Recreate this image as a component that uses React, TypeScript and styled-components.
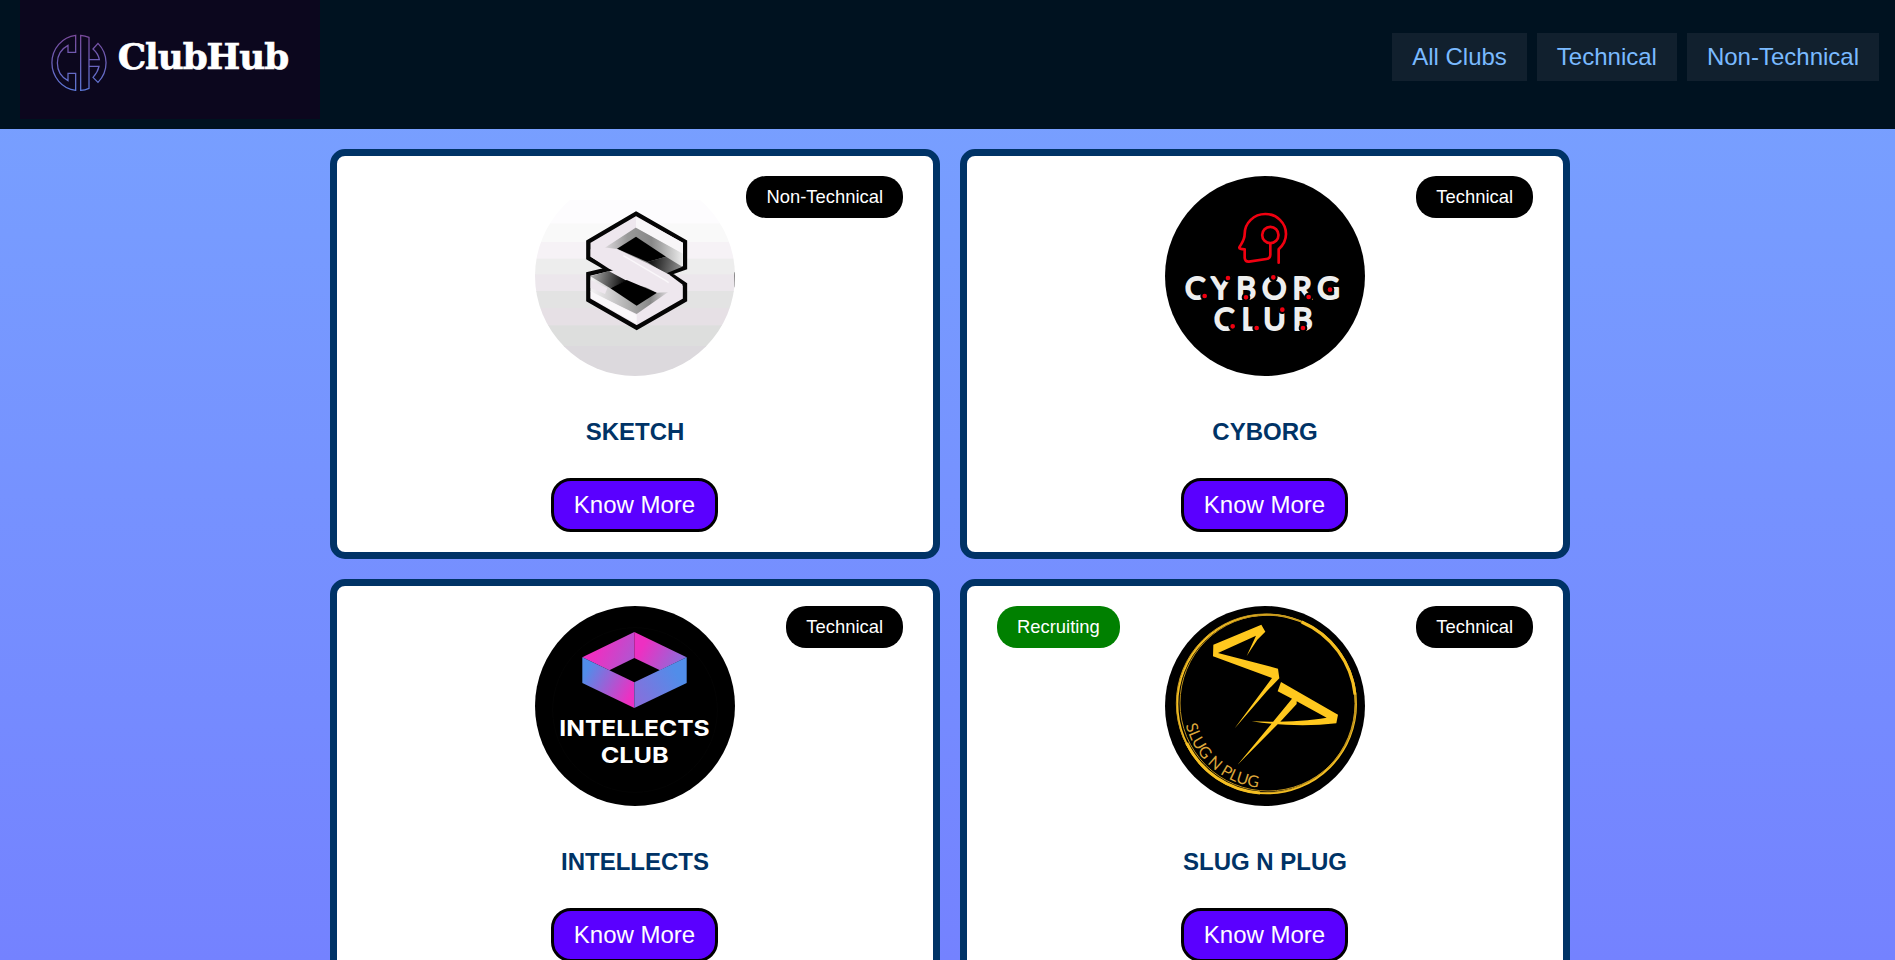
import React from 'react';
import styled, { createGlobalStyle } from 'styled-components';

const GlobalStyle = createGlobalStyle`
  * { box-sizing: border-box; }
  html, body { margin: 0; height: 100%; overflow: hidden; }
  body { font-family: "Liberation Sans", Arial, sans-serif; }
`;

const Page = styled.div`
  height: 960px;
  overflow: hidden;
  background: linear-gradient(180deg, #78a3ff 0%, #7482ff 100%);
`;

const Header = styled.header`
  display: flex;
  justify-content: space-between;
  align-items: flex-start;
  height: 129px;
  padding: 0 16px 0 20px;
  background: #001220;
`;

const Brand = styled.svg`
  display: block;
  width: 300px;
  height: 119px;
  background: #0c071e;
`;

const Nav = styled.nav`
  display: flex;
  gap: 10px;
  padding-top: 33px;
`;

const NavLink = styled.a`
  height: 48px;
  padding: 0 20px;
  font-size: 24px;
  line-height: 48px;
  white-space: nowrap;
  color: #7abaff;
  background: #11202e;
`;

const Grid = styled.main`
  display: grid;
  grid-template-columns: 610px 610px;
  gap: 20px;
  padding: 20px 0 0 330px;
`;

const Card = styled.article`
  position: relative;
  display: flex;
  flex-direction: column;
  align-items: center;
  height: 410px;
  padding-top: 20px;
  border: 7px solid #003366;
  border-radius: 15px;
  background: #fff;
`;

const Badge = styled.span<{ $side: 'left' | 'right' }>`
  position: absolute;
  top: 20px;
  ${(p) => p.$side}: 30px;
  height: 42px;
  padding: 0 20px;
  border-radius: 20px;
  font-size: 18.4px;
  line-height: 41px;
  color: #fff;
  background: ${(p) => (p.$side === 'left' ? '#008000' : '#000')};
`;

const Emblem = styled.svg`
  display: block;
  width: 200px;
  height: 200px;
  border-radius: 50%;
`;

const Title = styled.h2`
  margin: 42px 0 32px;
  font-size: 24px;
  line-height: 28px;
  font-weight: 700;
  color: #003366;
`;

const MoreButton = styled.button`
  height: 54px;
  width: 167px;
  margin-right: 1px;
  padding: 0;
  border: 3px solid #000;
  border-radius: 20px;
  font: 24px "Liberation Sans", Arial, sans-serif;
  color: #fff;
  background: #5a00ff;
`;

const Logo = () => (
  <Brand viewBox="60 0 900 357">
    <defs>
      <linearGradient id="mark" x1="0" y1="104" x2="0" y2="273" gradientUnits="userSpaceOnUse">
        <stop offset="0" stopColor="#7a4a9c" />
        <stop offset="1" stopColor="#5c78d8" />
      </linearGradient>
    </defs>
    <g fill="none" stroke="url(#mark)" strokeWidth="3.8">
      <path d="M227 106A80 83 0 0 0 227 271V220H204V242A60 60 0 0 1 204 136V157H227Z" />
      <path d="M242 106Q255 107 267 112V265Q255 271 242 271Z" />
      <path d="M267 179H298Q295 161 279 147L294 130A83 83 0 0 1 294 247L279 232Q293 217 297 199H267" />
    </g>
    <text
      x="353"
      y="206"
      fontFamily="DejaVu Serif"
      fontWeight="700"
      fontSize="107"
      fill="#fff"
      stroke="#fff"
      strokeWidth="2"
      letterSpacing="-3"
      textLength="512"
      lengthAdjust="spacingAndGlyphs"
    >
      ClubHub
    </text>
  </Brand>
);

const SketchEmblem = () => (
  <Emblem viewBox="45 48 600 600">
    <defs>
      <linearGradient id="fadeR" x1="385" y1="300" x2="490" y2="320" gradientUnits="userSpaceOnUse">
        <stop offset="0" stopColor="#080808" /><stop offset="1" stopColor="#999" />
      </linearGradient>
      <linearGradient id="fadeL" x1="215" y1="350" x2="315" y2="370" gradientUnits="userSpaceOnUse">
        <stop offset="0" stopColor="#aaa" /><stop offset="1" stopColor="#080808" />
      </linearGradient>
      <linearGradient id="innerTop" x1="250" y1="265" x2="490" y2="265" gradientUnits="userSpaceOnUse">
        <stop offset="0" stopColor="#e0dce0" /><stop offset=".3" stopColor="#999" /><stop offset=".6" stopColor="#888" /><stop offset="1" stopColor="#eee" />
      </linearGradient>
      <linearGradient id="innerLow" x1="215" y1="400" x2="450" y2="400" gradientUnits="userSpaceOnUse">
        <stop offset="0" stopColor="#f4f2f4" /><stop offset=".5" stopColor="#aaa" /><stop offset=".75" stopColor="#888" /><stop offset="1" stopColor="#e8e4e8" />
      </linearGradient>
    </defs>
    <rect x="45" y="48" width="600" height="600" fill="#fff" />
    <rect x="45" y="120" width="600" height="72" fill="#fdfcfe" />
    <rect x="45" y="190" width="600" height="58" fill="#f9f9f9" />
    <rect x="45" y="246" width="600" height="52" fill="#f6f2f6" />
    <rect x="45" y="296" width="600" height="49" fill="#ededed" />
    <rect x="45" y="343" width="600" height="52" fill="#ece7ec" />
    <rect x="45" y="393" width="600" height="52" fill="#e3e3e3" />
    <rect x="45" y="444" width="600" height="54" fill="#e6e0e5" />
    <rect x="45" y="496" width="600" height="64" fill="#dddedd" />
    <rect x="45" y="558" width="600" height="90" fill="#dcd9dd" />
    <path d="M348 161L495 245V323L446 340L495 373V420L350 503L205 420V342L264 328L205 294V245Z" fill="#eee7ee" stroke="#050505" strokeWidth="13" />
    <path d="M349 202L489 280V318L437 337L250 266Z" fill="url(#innerTop)" />
    <path d="M348 171L489 248V281L348 203Z" fill="#f8f6f8" />
    <path d="M348 230L438 290L382 306L291 266Z" fill="#000" />
    <path d="M382 306L438 290L487 320L436 341Z" fill="url(#fadeR)" />
    <path d="M212 352L448 394L350 462L212 396Z" fill="url(#innerLow)" />
    <path d="M212 360L262 384L255 402L212 384Z" fill="#eee7ee" />
    <path d="M212 394L350 464V492L212 414Z" fill="#faf8fa" />
    <path d="M211 349L266 333L320 362L271 385Z" fill="url(#fadeL)" />
    <path d="M271 385L320 360L411 398L350 437Z" fill="#000" />
    <path d="M212 290L212 268L250 262L291 267L382 310L446 343L488 374L450 396L411 398L320 353L265 325Z" fill="#eee7ee" />
    <path d="M310 287L436 361L446 368" stroke="#faf7fa" strokeWidth="4" fill="none" />
    <path d="M644 337V382" stroke="#777" strokeWidth="3" />
  </Emblem>
);

const CYBORG_DOTS = [
  [164, 408], [234, 354], [288, 412], [370, 352], [476, 411], [540, 389],
  [248, 499], [320, 504], [397, 449], [459, 504],
];

const CyborgEmblem = () => (
  <Emblem viewBox="45 48 600 600">
    <rect x="45" y="48" width="600" height="600" fill="#000" />
    <g fill="none" stroke="#f00010" strokeWidth="8" strokeLinecap="round" strokeLinejoin="round">
      <path d="M386 308V268C400 255 408 240 408 222A62 60 0 0 0 284 222C284 240 276 248 268 262Q267 268 284 268V294Q285 306 297 305L349 297Q361 295 361 284V250" />
      <circle cx="361" cy="225" r="24.5" />
    </g>
    <g fill="#eee" stroke="#eee" strokeWidth="6" strokeLinejoin="round" fontFamily="Lato" fontWeight="400" fontSize="92">
      <text x="105" y="416" textLength="464">CYBORG</text>
      <text x="192" y="510" textLength="296">CLUB</text>
    </g>
    {CYBORG_DOTS.map(([x, y]) => (
      <circle key={`${x}-${y}`} cx={x} cy={y} r="10" fill="#f00010" stroke="#000" strokeWidth="6" />
    ))}
  </Emblem>
);

const IntellectsEmblem = () => (
  <Emblem viewBox="45 48 600 600">
    <defs>
      <linearGradient id="ia" x1="230" y1="180" x2="370" y2="240" gradientUnits="userSpaceOnUse">
        <stop offset="0" stopColor="#ed30c2" /><stop offset="1" stopColor="#9a63d6" />
      </linearGradient>
      <linearGradient id="ib" x1="370" y1="165" x2="490" y2="225" gradientUnits="userSpaceOnUse">
        <stop offset="0" stopColor="#ed30c2" /><stop offset="1" stopColor="#8670dc" />
      </linearGradient>
      <linearGradient id="ic" x1="200" y1="240" x2="335" y2="310" gradientUnits="userSpaceOnUse">
        <stop offset="0" stopColor="#518de9" /><stop offset="1" stopColor="#ed30c2" />
      </linearGradient>
      <linearGradient id="id" x1="340" y1="310" x2="465" y2="240" gradientUnits="userSpaceOnUse">
        <stop offset="0" stopColor="#8670dc" /><stop offset="1" stopColor="#518de9" />
      </linearGradient>
    </defs>
    <rect x="45" y="48" width="600" height="600" fill="#000" />
    <circle cx="345" cy="360" r="247" fill="none" stroke="#060606" strokeWidth="2" />
    <path d="M343 126L187 202L268 241L343 204Z" fill="url(#ia)" />
    <path d="M343 126L500 202L420 241L343 204Z" fill="url(#ib)" />
    <path d="M187 202L343 277V354L187 279Z" fill="url(#ic)" />
    <path d="M500 202L343 277V354L500 279Z" fill="url(#id)" />
    <g fill="#fff" fontFamily="Inter" fontWeight="700" fontSize="66">
      <text x="118" y="438" textLength="451" lengthAdjust="spacingAndGlyphs">INTELLECTS</text>
      <text x="242" y="519" textLength="204" lengthAdjust="spacingAndGlyphs">CLUB</text>
    </g>
  </Emblem>
);

const SlugEmblem = () => (
  <Emblem viewBox="45 48 600 600">
    <rect x="45" y="48" width="600" height="600" fill="#000" />
    <g fill="none" stroke="#f5bf22">
      <circle cx="350" cy="342" r="268" strokeWidth="6" />
      <circle cx="354" cy="339" r="264" strokeWidth="3" stroke="#b88d1c" />
      <circle cx="347" cy="340" r="268" strokeWidth="3" stroke="#c89a20" />
      <path d="M455 96A268 268 0 0 1 615 314M110 459A268 268 0 0 0 330 609" strokeWidth="9" />
    </g>
    <g fill="#ffc81e">
      <path d="M190 164L334 104L346 125L322 149L290 198L318 137L204 189L384 236L388 265L351 303L253 416L366 264L189 199Z" />
      <path d="M393 276L564 374L559 400C480 409 390 407 305 394C390 397 470 393 530 383L440 334V342L395 391L262 525L373 391L426 326L383 304Z" />
    </g>
    <path id="slugArc" d="M107 405A251 251 0 0 0 345 594" fill="none" />
    <text fontFamily="Lato" fontSize="48" fill="#dba63a">
      <textPath href="#slugArc" textLength="306" lengthAdjust="spacingAndGlyphs">SLUG N PLUG</textPath>
    </text>
  </Emblem>
);

type Club = { name: string; kind: string; recruiting?: boolean; Art: React.FC };

const clubs: Club[] = [
  { name: 'SKETCH', kind: 'Non-Technical', Art: SketchEmblem },
  { name: 'CYBORG', kind: 'Technical', Art: CyborgEmblem },
  { name: 'INTELLECTS', kind: 'Technical', Art: IntellectsEmblem },
  { name: 'SLUG N PLUG', kind: 'Technical', recruiting: true, Art: SlugEmblem },
];

export default function App() {
  return (
    <Page>
      <GlobalStyle />
      <Header>
        <Logo />
        <Nav>
          <NavLink>All Clubs</NavLink>
          <NavLink>Technical</NavLink>
          <NavLink>Non-Technical</NavLink>
        </Nav>
      </Header>
      <Grid>
        {clubs.map(({ name, kind, recruiting, Art }) => (
          <Card key={name}>
            {recruiting && <Badge $side="left">Recruiting</Badge>}
            <Badge $side="right">{kind}</Badge>
            <Art />
            <Title>{name}</Title>
            <MoreButton>Know More</MoreButton>
          </Card>
        ))}
      </Grid>
    </Page>
  );
}
